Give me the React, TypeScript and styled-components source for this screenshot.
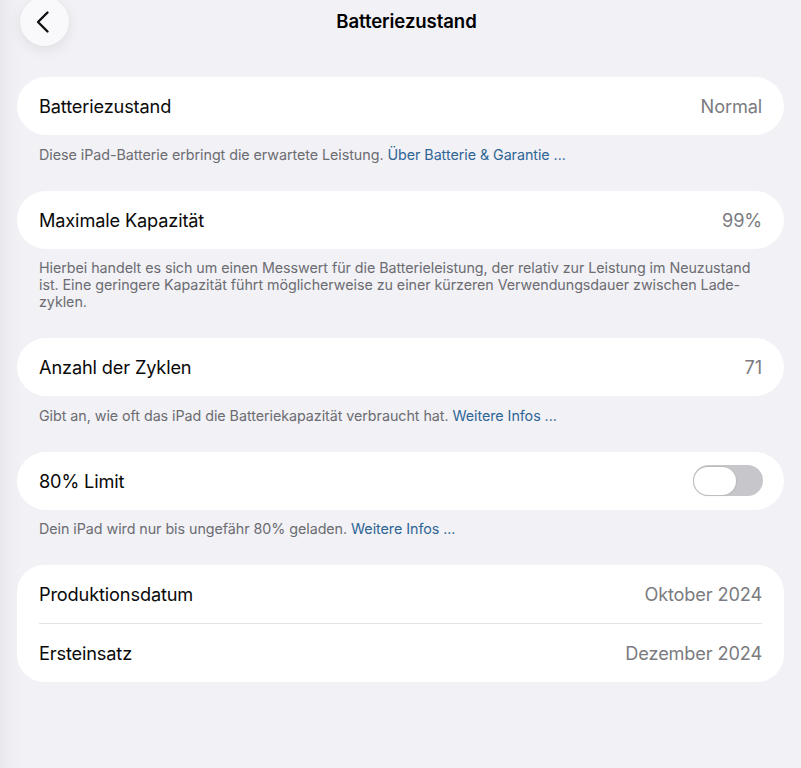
import React from "react";
import styled, { createGlobalStyle } from "styled-components";

const Global = createGlobalStyle`
  html, body { margin: 0; padding: 0; }
  body {
    background: #f1f1f6;
    font-family: Inter, "Noto Sans", "Liberation Sans", sans-serif;
    -webkit-font-smoothing: antialiased;
  }
`;

const Page = styled.div`
  min-height: 768px;
  box-sizing: border-box;
  padding: 0 17px 0 17px;
  background: linear-gradient(to right, #e8e8ed 0px, #eeeef3 12px, #f1f1f6 22px);
  overflow: hidden;
`;

const Header = styled.header`
  height: 77px;
  display: grid;
  grid-template-columns: 52px 1fr 52px;
  align-items: start;
`;

const BackButton = styled.button`
  width: 49px;
  height: 49px;
  margin-top: -3px;
  margin-left: 3px;
  border: none;
  border-radius: 50%;
  background: #f9f9fb;
  box-shadow: 0 4px 14px rgba(0, 0, 0, 0.08), 0 0 2px rgba(0, 0, 0, 0.04);
  display: flex;
  align-items: center;
  justify-content: center;
  padding: 0;
  padding-right: 3px;
`;

const Title = styled.h1`
  margin: 0;
  padding-top: 10px;
  padding-left: 12px;
  text-align: center;
  font-size: 18.6px;
  font-weight: 600;
  line-height: 22px;
  color: #000;
  letter-spacing: -0.1px;
`;

const Card = styled.div<{ $radius?: number }>`
  background: #fff;
  border-radius: ${(p) => p.$radius ?? 29}px;
  overflow: hidden;
`;

const Row = styled.div`
  height: 58px;
  padding: 0 22px;
  display: flex;
  align-items: center;
  justify-content: space-between;
  font-size: 18.2px;
  letter-spacing: -0.15px;
`;

const Separator = styled.div`
  height: 1px;
  margin: 0 22px;
  background: #e4e4e8;
`;

const Label = styled.span`
  color: #0a0a0a;
`;

const Value = styled.span`
  color: #7b7b80;
`;

const Footer = styled.p`
  margin: 10.5px 0 28px;
  padding: 0 22px;
  font-size: 14.3px;
  line-height: 17px;
  color: #6c6c71;
  letter-spacing: -0.05px;
  white-space: nowrap;
`;

const Link = styled.a`
  color: #2f6595;
  text-decoration: none;
`;

const Toggle = styled.div`
  width: 70px;
  height: 31px;
  border-radius: 16px;
  background: #c7c7cb;
  position: relative;
  margin-right: -1px;
`;

const Knob = styled.div`
  position: absolute;
  left: 1px;
  top: 1.5px;
  width: 42px;
  height: 28px;
  border-radius: 14px;
  background: #fff;
  box-shadow: 0 0 0 1px #bdbdc1, 0 1px 2px rgba(0, 0, 0, 0.08);
`;

export default function App() {
  return (
    <>
      <Global />
      <Page>
        <Header>
          <BackButton aria-label="Zurück">
            <svg width="16" height="24" viewBox="0 0 16 24" fill="none">
              <path
                d="M12.5 2.5 L3 12 L12.5 21.5"
                stroke="#111"
                strokeWidth="2.4"
                strokeLinecap="round"
                strokeLinejoin="round"
              />
            </svg>
          </BackButton>
          <Title>Batteriezustand</Title>
          <div />
        </Header>

        <Card>
          <Row>
            <Label>Batteriezustand</Label>
            <Value>Normal</Value>
          </Row>
        </Card>
        <Footer>
          Diese iPad-Batterie erbringt die erwartete Leistung.{" "}
          <Link>Über Batterie &amp; Garantie ...</Link>
        </Footer>

        <Card>
          <Row>
            <Label>Maximale Kapazität</Label>
            <Value>99%</Value>
          </Row>
        </Card>
        <Footer>
          Hierbei handelt es sich um einen Messwert für die Batterieleistung, der relativ zur Leistung im Neuzustand
          <br />
          ist. Eine geringere Kapazität führt möglicherweise zu einer kürzeren Verwendungsdauer zwischen Lade-
          <br />
          zyklen.
        </Footer>

        <Card>
          <Row>
            <Label>Anzahl der Zyklen</Label>
            <Value>71</Value>
          </Row>
        </Card>
        <Footer>
          Gibt an, wie oft das iPad die Batteriekapazität verbraucht hat. <Link>Weitere Infos ...</Link>
        </Footer>

        <Card>
          <Row>
            <Label>80% Limit</Label>
            <Toggle>
              <Knob />
            </Toggle>
          </Row>
        </Card>
        <Footer>
          Dein iPad wird nur bis ungefähr 80% geladen. <Link>Weitere Infos ...</Link>
        </Footer>

        <Card $radius={27}>
          <Row>
            <Label>Produktionsdatum</Label>
            <Value>Oktober 2024</Value>
          </Row>
          <Separator />
          <Row>
            <Label>Ersteinsatz</Label>
            <Value>Dezember 2024</Value>
          </Row>
        </Card>
      </Page>
    </>
  );
}
